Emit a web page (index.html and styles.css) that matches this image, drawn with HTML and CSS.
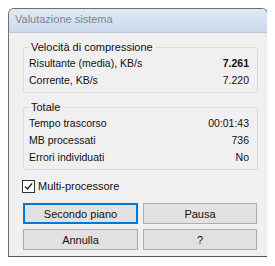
FILE: index.html
```html
<!DOCTYPE html>
<html lang="it">
<head>
  <meta charset="UTF-8">
  <title>Valutazione sistema</title>
  <link rel="stylesheet" href="styles.css">
</head>
<body>

<div class="window">
  <div class="titlebar">Valutazione sistema</div>

  <div class="client">
    <fieldset class="group">
      <legend>Velocità di compressione</legend>
      <div class="row"><span>Risultante (media), KB/s</span><b>7.261</b></div>
      <div class="row"><span>Corrente, KB/s</span><span>7.220</span></div>
    </fieldset>

    <fieldset class="group">
      <legend>Totale</legend>
      <div class="row"><span>Tempo trascorso</span><span>00:01:43</span></div>
      <div class="row"><span>MB processati</span><span>736</span></div>
      <div class="row"><span>Errori individuati</span><span>No</span></div>
    </fieldset>

    <label class="check">
      <span class="box">
        <svg width="11" height="11" viewBox="0 0 11 11"><path d="M2 5.5 L4.5 8 L9 2.5" fill="none" stroke="#222" stroke-width="1.3"/></svg>
      </span>
      Multi-processore
    </label>

    <div class="buttons">
      <button class="btn focused">Secondo piano</button>
      <button class="btn">Pausa</button>
      <button class="btn">Annulla</button>
      <button class="btn">?</button>
    </div>
  </div>
</div>

</body>
</html>
```

FILE: styles.css
```css
html, body {
  background: #fff;
}
body {
  margin: 8px;
  font-family: 'Liberation Sans', Arial, sans-serif;
  font-size: 10.5px;
  color: #111;
}

.window {
  width: 258px;
  border: 1px solid #6f6f6f;
  border-right-color: #555;
  border-bottom-color: #555;
  border-radius: 6px 6px 0 0;
  background: #f0f0f0;
  overflow: hidden;
}

.titlebar {
  height: 23px;
  line-height: 21px;
  padding-left: 6px;
  font-size: 11px;
  color: #7c8590;
  background: linear-gradient(#e1eaf5, #c9d9ec);
  border-bottom: 1px solid #b7c6d8;
}

.client {
  padding: 8px 9px 6px 14px;
}

.group {
  margin: 0 0 8px 0;
  padding: 2px 8px 3px 5px;
  border: 1px solid #dcdcdc;
  border-radius: 2px;
}
.group legend {
  padding: 0 2px;
  font-size: 11px;
}

.row {
  display: flex;
  justify-content: space-between;
  line-height: 17px;
}
.row b {
  font-weight: bold;
}

.check {
  display: flex;
  align-items: center;
  gap: 3px;
  margin: 9px 0 0 -1px;
  height: 14px;
  font-size: 11px;
}
.box {
  display: block;
  width: 11px;
  height: 11px;
  border: 1px solid #333;
  background: #fff;
}
.box svg {
  display: block;
}

.buttons {
  display: grid;
  grid-template-columns: 115px 114px;
  column-gap: 5px;
  row-gap: 5px;
  margin-top: 10px;
}
.btn {
  height: 21px;
  padding: 0;
  font-family: inherit;
  font-size: 11px;
  color: #111;
  background: #e1e1e1;
  border: 1px solid #adadad;
  border-radius: 0;
}
.btn.focused {
  border: 2px solid #0078d7;
}
```
